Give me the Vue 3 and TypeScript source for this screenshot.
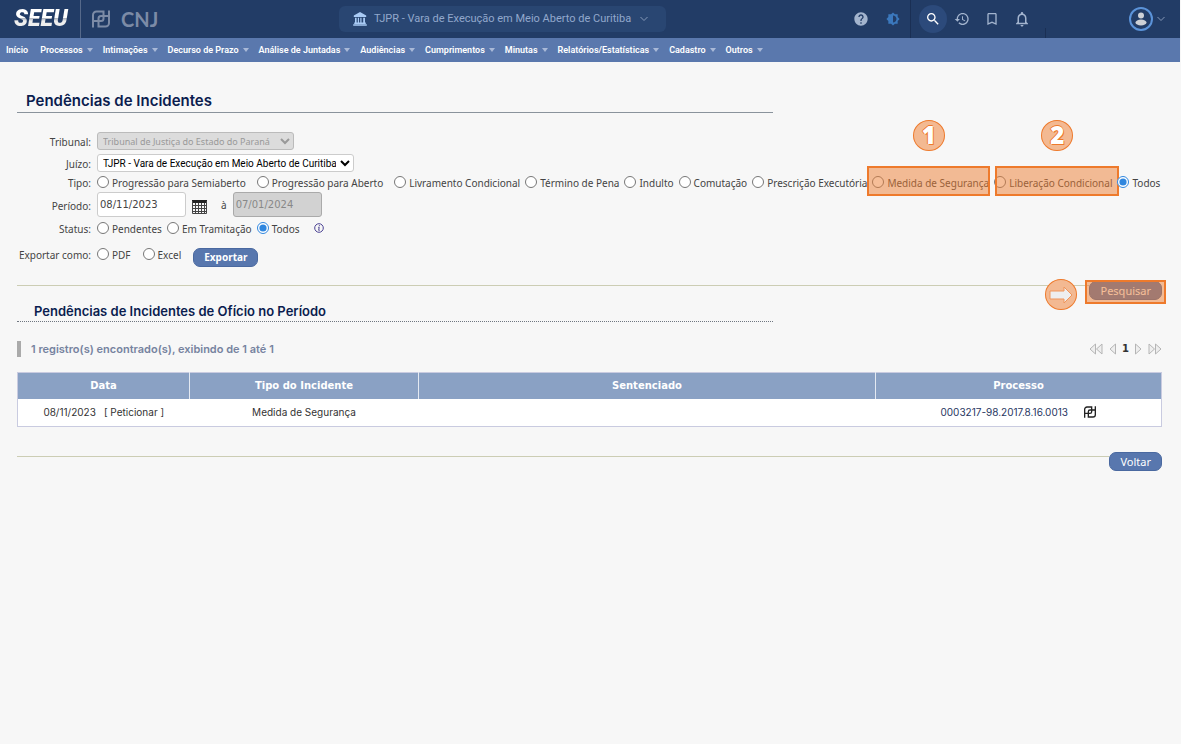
<script setup lang="ts">
import { ref } from 'vue'

interface Tipo {
  label: string
  wide?: boolean
  mark?: number
}

const menu: string[] = [
  'Início',
  'Processos',
  'Intimações',
  'Decurso de Prazo',
  'Análise de Juntadas',
  'Audiências',
  'Cumprimentos',
  'Minutas',
  'Relatórios/Estatísticas',
  'Cadastro',
  'Outros',
]

const tipos: Tipo[] = [
  { label: 'Progressão para Semiaberto', wide: true },
  { label: 'Progressão para Aberto', wide: true },
  { label: 'Livramento Condicional' },
  { label: 'Término de Pena' },
  { label: 'Indulto' },
  { label: 'Comutação' },
  { label: 'Prescrição Executória' },
  { label: 'Medida de Segurança', mark: 1 },
  { label: 'Liberação Condicional', mark: 2 },
  { label: 'Todos' },
]

const statuses: string[] = ['Pendentes', 'Em Tramitação', 'Todos']
const formatos: string[] = ['PDF', 'Excel']

const tipo = ref('Todos')
const status = ref('Todos')
const formato = ref('')
const inicio = ref('08/11/2023')
const fim = ref('07/01/2024')

const registros = [
  { data: '08/11/2023', tipo: 'Medida de Segurança', sentenciado: '', processo: '0003217-98.2017.8.16.0013' },
]
</script>

<template>
  <div class="page">
    <header class="topbar">
      <div class="brands">
        <a class="seeu" href="#"><span>SEEU</span></a>
        <a class="cnj" href="#">
          <svg class="pd" viewBox="0 0 18 18" aria-hidden="true">
            <path d="M1 17.500V5a3.500 3.500 0 0 1 3.500-3.500H11.500V8.500a2.500 2.500 0 0 1-2.500 2.500H1M17 .5V13a3.500 3.500 0 0 1-3.500 3.500H6.500V8.500A2.500 2.500 0 0 1 9 6H17" />
          </svg>
          <span>CNJ</span>
        </a>
      </div>
      <button class="court" type="button">
        <svg class="bank" viewBox="0 0 14 14" aria-hidden="true">
          <path d="M7 0 .8 3.6V5h12.4V3.6zM2 5.8h1.6v5H2zm2.8 0h1.2v5H4.8zm2.5 0h1.2v5H7.3zm2.9 0h1.8v5h-1.8zM1.2 10.6h11.6V12H1.2zM.2 12.2h13.6v1.5H.2z" />
        </svg>
        <span>TJPR - Vara de Execução em Meio Aberto de Curitiba</span>
        <svg class="chev" viewBox="0 0 10 6" aria-hidden="true"><path d="M1.500 1 5 4.500 8.500 1" /></svg>
      </button>
      <div class="tools">
        <button class="tool" type="button" aria-label="Ajuda">
          <svg viewBox="0 0 24 24"><path d="M12 2C6.480 2 2 6.480 2 12s4.480 10 10 10 10-4.480 10-10S17.520 2 12 2zm1 17h-2v-2h2v2zm2.070-7.750l-.9.92C13.450 12.900 13 13.500 13 15h-2v-.5c0-1.100.45-2.100 1.170-2.830l1.240-1.260c.37-.36.59-.86.59-1.410 0-1.100-.9-2-2-2s-2 .9-2 2H8c0-2.210 1.790-4 4-4s4 1.790 4 4c0 .88-.36 1.680-.93 2.250z" /></svg>
        </button>
        <button class="tool contrast" type="button" aria-label="Contraste">
          <svg viewBox="0 0 24 24"><path d="M20 15.310L23.310 12 20 8.690V4h-4.690L12 .69 8.690 4H4v4.690L.69 12 4 15.310V20h4.690L12 23.310 15.310 20H20v-4.690zM12 18V6c3.310 0 6 2.690 6 6s-2.690 6-6 6z" /></svg>
        </button>
        <span class="rule"></span>
        <button class="tool active" type="button" aria-label="Buscar">
          <svg viewBox="0 0 24 24"><path d="M15.500 14h-.79l-.28-.27C15.410 12.590 16 11.110 16 9.500 16 5.910 13.090 3 9.500 3S3 5.910 3 9.500 5.910 16 9.500 16c1.610 0 3.090-.59 4.230-1.570l.27.28v.79l5 4.990L20.490 19l-4.990-5zm-6 0C7.010 14 5 11.990 5 9.500S7.010 5 9.500 5 14 7.010 14 9.500 11.990 14 9.500 14z" /></svg>
        </button>
        <button class="tool" type="button" aria-label="Histórico">
          <svg viewBox="0 0 24 24"><path d="M13 3c-4.970 0-9 4.030-9 9H1l3.890 3.890.07.14L9 12H6c0-3.870 3.130-7 7-7s7 3.130 7 7-3.130 7-7 7c-1.930 0-3.680-.79-4.940-2.060l-1.420 1.420C8.270 19.990 10.510 21 13 21c4.970 0 9-4.030 9-9s-4.030-9-9-9zm-1 5v5l4.280 2.540.72-1.210-3.500-2.080V8H12z" /></svg>
        </button>
        <button class="tool" type="button" aria-label="Favoritos">
          <svg viewBox="0 0 24 24"><path d="M17 3H7c-1.100 0-1.990.9-1.990 2L5 21l7-3 7 3V5c0-1.100-.9-2-2-2zm0 15l-5-2.180L7 18V5h10v13z" /></svg>
        </button>
        <button class="tool bell" type="button" aria-label="Notificações">
          <svg viewBox="0 0 24 24"><path d="M12 22c1.100 0 2-.9 2-2h-4c0 1.100.9 2 2 2zm6-6v-5c0-3.070-1.630-5.640-4.500-6.320V4c0-.83-.67-1.500-1.500-1.500s-1.500.67-1.500 1.500v.68C7.640 5.360 6 7.920 6 11v5l-2 2v1h16v-1l-2-2zm-2 1H8v-6c0-2.480 1.510-4.500 4-4.500s4 2.020 4 4.500v6z" /></svg>
        </button>
        <span class="rule short"></span>
        <button class="user" type="button" aria-label="Conta do usuário">
          <svg class="avatar" viewBox="0 0 24 24">
            <circle class="ring" cx="12" cy="12" r="11" />
            <circle cx="12" cy="8.500" r="3" />
            <ellipse cx="12" cy="15.500" rx="5.500" ry="3" />
          </svg>
          <svg class="chev" viewBox="0 0 10 6"><path d="M1.500 1 5 4.500 8.500 1" /></svg>
        </button>
      </div>
    </header>

    <nav class="menu">
      <a v-for="(item, i) in menu" :key="item" href="#">{{ item }}<i v-if="i > 0" class="caret"></i></a>
    </nav>

    <main class="content">
      <h1 class="title">Pendências de Incidentes</h1>

      <form class="form" @submit.prevent>
        <div class="row">
          <label class="name" for="tribunal">Tribunal:</label>
          <select id="tribunal" class="tribunal" disabled>
            <option>Tribunal de Justiça do Estado do Paraná</option>
          </select>
        </div>
        <div class="row">
          <label class="name" for="juizo">Juízo:</label>
          <select id="juizo" class="juizo">
            <option>TJPR - Vara de Execução em Meio Aberto de Curitiba</option>
          </select>
        </div>
        <div class="row tipo-row" role="radiogroup" aria-labelledby="tipo-name">
          <span id="tipo-name" class="name">Tipo:</span>
          <label v-for="t in tipos" :key="t.label" class="option" :class="{ wide: t.wide }">
            <input v-model="tipo" type="radio" name="tipo" :value="t.label" />
            <span>{{ t.label }}</span>
            <span v-if="t.mark" class="mark" :class="'mark-' + t.mark"><b class="badge">{{ t.mark }}</b></span>
          </label>
        </div>
        <div class="row period">
          <label class="name" for="inicio">Período:</label>
          <input id="inicio" v-model="inicio" class="date" type="text" />
          <button class="calendar" type="button" aria-label="Abrir calendário">
            <svg viewBox="0 0 15 14">
              <path class="head" d="M0 0h15v3H0z" />
              <path class="lines" d="M.5 1v12.500h14V1M.5 5.500h14M.5 8.500h14M.5 11.500h14M3.500 3v11M6.500 3v11M9.500 3v11M12.500 3v11" />
            </svg>
          </button>
          <label class="until" for="fim">à</label>
          <input id="fim" v-model="fim" class="date" type="text" disabled />
        </div>
        <div class="row status-row" role="radiogroup" aria-labelledby="status-name">
          <span id="status-name" class="name">Status:</span>
          <label v-for="s in statuses" :key="s" class="option">
            <input v-model="status" type="radio" name="status" :value="s" />
            <span>{{ s }}</span>
          </label>
          <svg class="info" viewBox="0 0 10 10" aria-hidden="true">
            <circle cx="5" cy="5" r="4.300" />
            <path d="M5.400 2.200v1M4.200 4.300h1L4.700 7.300h1" />
          </svg>
        </div>
        <div class="row export-row" role="radiogroup" aria-labelledby="export-name">
          <span id="export-name" class="name">Exportar como:</span>
          <label v-for="f in formatos" :key="f" class="option">
            <input v-model="formato" type="radio" name="formato" :value="f" />
            <span>{{ f }}</span>
          </label>
          <button class="btn export" type="button">Exportar</button>
        </div>
      </form>

      <div class="actions">
        <hr />
        <div class="search">
          <button class="btn big" type="button">Pesquisar</button>
          <span class="mark search-mark">
            <span class="badge pointer">
              <svg viewBox="0 0 24 18" aria-hidden="true"><path d="M1 5h14V1l8 8-8 8v-4H1z" /></svg>
            </span>
          </span>
        </div>
      </div>

      <h2 class="subtitle">Pendências de Incidentes de Ofício no Período</h2>

      <div class="summary">
        <p class="count">1 registro(s) encontrado(s), exibindo de 1 até 1</p>
        <div class="pager">
          <button type="button" aria-label="Primeira página"><svg class="two" viewBox="0 0 14 12"><path d="M6.500 1v10L1 6zM13 1v10L7.500 6z" /></svg></button>
          <button type="button" aria-label="Página anterior"><svg viewBox="0 0 7 12"><path d="M6.500 1v10L1 6z" /></svg></button>
          <b>1</b>
          <button type="button" aria-label="Próxima página"><svg viewBox="0 0 7 12"><path d="M.5 1v10L6 6z" /></svg></button>
          <button type="button" aria-label="Última página"><svg class="two" viewBox="0 0 14 12"><path d="M1 1v10L6.500 6zM7.500 1v10L13 6z" /></svg></button>
        </div>
      </div>

      <table class="table">
        <thead>
          <tr>
            <th class="c-data">Data</th>
            <th class="c-tipo">Tipo do Incidente</th>
            <th class="c-sent">Sentenciado</th>
            <th class="c-proc">Processo</th>
          </tr>
        </thead>
        <tbody>
          <tr v-for="r in registros" :key="r.processo">
            <td><span class="day">{{ r.data }}</span><a href="#">[ Peticionar ]</a></td>
            <td>{{ r.tipo }}</td>
            <td>{{ r.sentenciado }}</td>
            <td>
              <div class="process">
                <a class="number" href="#">{{ r.processo }}</a>
                <svg class="pd" viewBox="0 0 18 18" aria-hidden="true">
                  <path d="M1 17.500V5a3.500 3.500 0 0 1 3.500-3.500H11.500V8.500a2.500 2.500 0 0 1-2.500 2.500H1M17 .5V13a3.500 3.500 0 0 1-3.500 3.500H6.500V8.500A2.500 2.500 0 0 1 9 6H17" />
                </svg>
              </div>
            </td>
          </tr>
        </tbody>
      </table>

      <div class="actions back">
        <hr />
        <button class="btn big" type="button">Voltar</button>
      </div>
    </main>
  </div>
</template>

<style>
body {
  margin: 0;
  background: #f7f7f7;
}
</style>

<style scoped>
.page {
  min-height: 100vh;
  padding-right: 1px;
  box-sizing: border-box;
  font-family: "DejaVu Sans", Verdana, sans-serif;
  font-size: 10px;
  line-height: 12px;
  color: #444;
}
a {
  color: inherit;
  text-decoration: none;
}
button {
  font: inherit;
  cursor: pointer;
}
svg {
  display: block;
}
.topbar {
  display: flex;
  align-items: center;
  height: 38px;
  background: #223c66;
}
.brands {
  display: flex;
  align-items: center;
  flex: 0 1 339px;
}
.seeu {
  box-sizing: border-box;
  width: 81px;
  padding-left: 14px;
  border-right: 1px solid #56698a;
  font: italic 900 23px/38px Roboto, sans-serif;
}
.seeu span {
  padding-right: 4px;
  background: linear-gradient(#fff 48%, #b4b9c2 50%, #eee 60%);
  background-clip: text;
  color: transparent;
}
.cnj {
  display: flex;
  align-items: center;
  gap: 11px;
  padding-left: 11px;
  font: 700 20px/34px Lato, sans-serif;
  color: #7c8ba6;
}
.pd {
  width: 18px;
  height: 18px;
  fill: none;
  stroke: #7c8ba6;
  stroke-width: 2;
}
.court {
  display: flex;
  align-items: center;
  height: 26px;
  padding: 0 17px 0 14px;
  border: 0;
  border-radius: 6px;
  background: #294672;
  color: #92a8cc;
  font: 11px/14px Roboto, sans-serif;
  white-space: nowrap;
}
.bank {
  width: 14px;
  height: 14px;
  margin-right: 7px;
  fill: #a9cbf5;
}
.chev {
  width: 10px;
  height: 6px;
  fill: none;
  stroke: #8699b8;
}
.court .chev {
  margin-left: 8px;
}
.tools {
  display: flex;
  align-items: center;
  flex: 1;
  justify-content: flex-end;
  padding-right: 14px;
}
.tool {
  display: flex;
  align-items: center;
  justify-content: center;
  width: 28px;
  height: 28px;
  margin-right: 2px;
  padding: 0;
  border: 0;
  border-radius: 50%;
  background: none;
}
.tool svg {
  width: 16px;
  height: 16px;
  fill: #a3b4ce;
}
.tool.bell svg {
  width: 18px;
  height: 18px;
}
.tool.contrast {
  margin: 0 3px 0 2px;
}
.tool.contrast svg {
  width: 14px;
  height: 14px;
  fill: #3b78bd;
}
.tool.active {
  margin: 0 1px 0 8px;
  background: #2c4a7b;
}
.tool.active svg {
  fill: #fff;
}
.rule {
  width: 1px;
  height: 38px;
  background: #1a2f54;
}
.rule.short {
  align-self: flex-end;
  height: 10px;
  margin: 0 83px 0 7px;
}
.user {
  display: flex;
  align-items: center;
  gap: 3px;
  padding: 0;
  border: 0;
  background: none;
}
.avatar {
  width: 24px;
  height: 24px;
  fill: #cdd0d6;
}
.ring {
  fill: none;
  stroke: #5b93d9;
  stroke-width: 2;
}
.menu {
  display: flex;
  align-items: center;
  height: 24px;
  padding-left: 6px;
  gap: 10px;
  background: #5a78ad;
  color: #fff;
  font: 600 9px/12px Roboto, sans-serif;
  white-space: nowrap;
}
.menu a {
  display: flex;
  align-items: center;
}
.menu a:first-child {
  margin-right: 2px;
}
.caret {
  margin-left: 4px;
  border: 3px solid transparent;
  border-top: 4px solid #a9b9d8;
  border-bottom: 0;
}
.content {
  padding: 29px 18px 0 17px;
}
.title,
.subtitle {
  width: 66%;
  margin: 0;
  box-sizing: border-box;
  font-family: Inter, sans-serif;
  font-weight: 600;
  color: #0b1d4f;
}
.title {
  padding: 0 9px 2px;
  border-bottom: 1px solid #8a939c;
  font-size: 15px;
  line-height: 19px;
}
.form {
  padding-top: 17px;
  font-family: "Noto Sans", Verdana, sans-serif;
}
.row {
  display: flex;
  align-items: center;
  height: 22px;
  white-space: nowrap;
}
.name {
  flex: none;
  width: 74px;
  margin-right: 6px;
  padding-top: 2px;
  text-align: right;
}
select {
  height: 18px;
  padding: 0 1px;
  border: 1px solid #ccc;
  border-radius: 3px;
  background: #fff;
  color: #000;
  font: 9px/14px "Noto Sans", Verdana, sans-serif;
}
.tribunal {
  width: 197px;
}
.juizo {
  width: 257px;
  font: 10px/14px Roboto, sans-serif;
}
select:disabled {
  background: #dcdcdc;
  border-color: #bbb;
  color: #999;
  opacity: 1;
}
.tipo-row {
  height: 15px;
  padding-bottom: 2px;
}
.option {
  position: relative;
  display: flex;
  align-items: center;
  gap: 3px;
  margin-right: 5px;
}
.option.wide {
  margin-right: 11px;
}
.option span {
  padding-top: 2px;
}
input[type='radio'] {
  width: 12px;
  height: 12px;
  margin: 0;
  accent-color: #2f86de;
}
.mark {
  position: absolute;
  box-sizing: border-box;
  border: 2px solid #ee7a2c;
  background: rgba(237, 125, 49, 0.5);
  pointer-events: none;
}
.mark-1 {
  inset: -9px -1px -7px -5px;
}
.mark-2 {
  inset: -9px -7px -7px 1px;
}
.badge {
  position: absolute;
  left: 50%;
  bottom: 43px;
  display: flex;
  align-items: center;
  justify-content: center;
  box-sizing: border-box;
  width: 32px;
  height: 31px;
  margin-left: -16px;
  border: 1px solid #ee7a2c;
  border-radius: 50%;
  background: #f3b992;
  color: #fff;
  font: 800 24px/28px "Open Sans", sans-serif;
  text-shadow: 1px 1px 0 #ee7a2c, -1px 0 0 #ee7a2c, 0 -1px 0 #ee7a2c;
}
.period {
  height: 27px;
}
.date {
  box-sizing: border-box;
  width: 89px;
  height: 25px;
  padding: 0 2px;
  border: 1px solid #ccc;
  border-radius: 3px;
  background: #fff;
  color: #444;
  font: 10px/14px "DejaVu Sans", Verdana, sans-serif;
}
.date:disabled {
  border-color: #aaa;
  background: #d2d2d2;
  color: #888;
}
.calendar {
  margin: 4px 14px 0 6px;
  padding: 0;
  border: 0;
  background: none;
}
.calendar svg {
  width: 15px;
  height: 14px;
}
.head {
  fill: #222;
}
.lines {
  fill: none;
  stroke: #444;
}
.until {
  margin-right: 6px;
}
.status-row {
  height: 20px;
  padding-bottom: 2px;
}
.info {
  width: 10px;
  height: 10px;
  margin-left: 9px;
  fill: none;
  stroke: #4b4293;
}
.export-row {
  height: 28px;
  padding-bottom: 4px;
}
.export-row .option {
  margin-right: 12px;
}
.btn {
  border: 1px solid #4a69a0;
  border-radius: 7px;
  background: #5877ae;
  color: #fff;
  box-sizing: border-box;
  height: 19px;
  padding: 0 10px;
  font-family: "Noto Sans", Verdana, sans-serif;
  font-size: 10px;
  line-height: 16px;
  white-space: nowrap;
}
.btn.export {
  margin-top: 6px;
  font-weight: 700;
}
.btn.big {
  font-size: 11px;
}
.actions {
  display: flex;
  align-items: flex-start;
  margin-top: 9px;
}
.actions hr {
  flex: 1;
  height: 1px;
  margin: 4px 0 0;
  border: 0;
  background: #cccdb4;
}
.search {
  position: relative;
}
.search-mark {
  inset: -1px -4px -4px -4px;
}
.pointer {
  left: -26px;
  bottom: -8px;
}
.pointer svg {
  width: 24px;
  height: 18px;
  fill: #eee;
  stroke: #f0955b;
}
.subtitle {
  padding: 2px 17px 0;
  border-bottom: 1px dotted #6f7680;
  font-size: 13px;
  line-height: 19px;
}
.summary {
  display: flex;
  align-items: center;
  justify-content: space-between;
  margin-top: 19px;
}
.count {
  margin: 0;
  padding-left: 10px;
  border-left: 4px solid #aaa;
  color: #76839f;
  font: 600 11px/16px Inter, sans-serif;
}
.pager {
  display: flex;
  align-items: center;
  gap: 6px;
  color: #333;
}
.pager button {
  padding: 0;
  border: 0;
  background: none;
}
.pager svg {
  width: 7px;
  height: 12px;
  fill: #eee;
  stroke: #b5b5b5;
}
.pager .two {
  width: 14px;
}
.table {
  width: 100%;
  margin-top: 15px;
  border: 1px solid #c9cbe0;
  border-collapse: collapse;
  table-layout: fixed;
  background: #fff;
  text-align: center;
}
th {
  height: 26px;
  padding: 0;
  border-left: 1px solid #e4e9f2;
  background: #8aa1c4;
  color: #fff;
  font-weight: 700;
}
th:first-child {
  border-left: 0;
}
.c-data {
  width: 15%;
}
.c-tipo {
  width: 20%;
}
.c-sent {
  width: 40%;
}
.c-proc {
  width: 25%;
}
td {
  height: 25px;
  padding: 0 0 2px;
  color: #333;
  font: 10px/14px Inter, sans-serif;
}
.day {
  margin-right: 8px;
}
.process {
  display: flex;
  align-items: center;
  justify-content: center;
  gap: 16px;
}
.number {
  color: #27365f;
}
.process .pd {
  width: 12px;
  height: 12px;
  stroke: #222;
}
.back {
  margin-top: 25px;
}
</style>
